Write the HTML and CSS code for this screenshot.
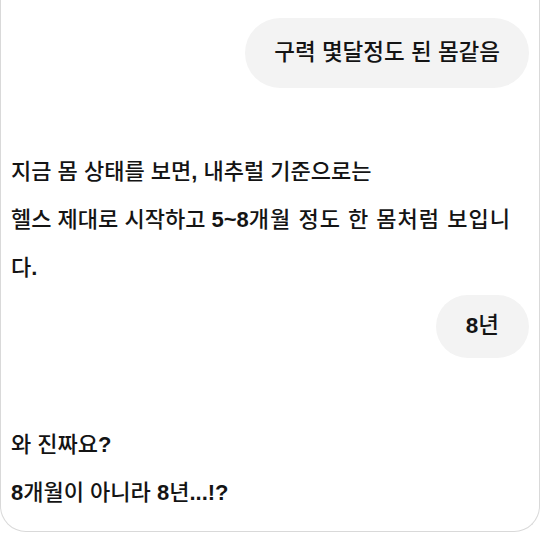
FILE: index.html
```html
<!DOCTYPE html>
<html lang="ko">
<head>
<meta charset="utf-8">
<link rel="stylesheet" href="styles.css">
</head>
<body>
<div class="card">
  <div class="row-user first">
    <div class="bubble">구력 몇달정도 된 몸같음</div>
  </div>
  <p class="reply">지금 몸 상태를 보면<span class="pn">,</span> 내추럴 기준으로는<br>헬스 제대로 시작하고 <b>5~8</b><span class="wide">개월 정도 한 몸처럼 보입니</span><br>다<span class="pn">.</span></p>
  <div class="row-user">
    <div class="bubble short"><b class="num">8</b>년</div>
  </div>
  <p class="reply second">와 진짜요<span class="pn">?</span><br><b>8</b>개월이 아니라 <b>8</b>년<b>...!?</b></p>
</div>
</body>
</html>
```

FILE: styles.css
```css
* { box-sizing: border-box; }
html, body { margin: 0; padding: 0; background: #ffffff; }
body {
  width: 540px;
  height: 536px;
  overflow: hidden;
  font-family: "Liberation Sans", "Noto Sans CJK KR", sans-serif;
  color: #141414;
}
.card {
  height: 532px;
  border: 1px solid #d9d9d9;
  border-top: none;
  border-radius: 0 0 26px 26px;
  padding: 18px 10px 0 10px;
  display: flex;
  flex-direction: column;
}
.row-user {
  display: flex;
  justify-content: flex-end;
}
.bubble {
  background: #f3f3f3;
  border-radius: 36px;
  padding: 20px 29px;
  font-size: 22.5px;
  line-height: 30px;
  font-weight: 500;
}
.bubble.short {
  padding: 16px 30px 17px;
}
.reply {
  margin: 60px 0 3px 0;
  font-size: 22px;
  line-height: 48px;
  font-weight: 500;
}
.reply b, .num, .pn { font-weight: 700; }
.wide { letter-spacing: 1px; }
.reply.second { margin-top: 63px; }
```
